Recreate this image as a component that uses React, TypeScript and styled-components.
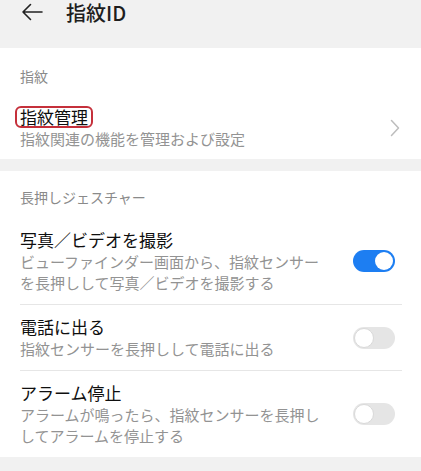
import React, { useState } from "react";
import styled, { createGlobalStyle } from "styled-components";

const GlobalStyle = createGlobalStyle`
	html, body {
		margin: 0;
		padding: 0;
		background: #f1f1f1;
	}
	body {
		font-family: "Noto Sans CJK JP", "Noto Sans", sans-serif;
		-webkit-font-smoothing: antialiased;
	}
`;

const Page = styled.div`
	width: 421px;
	height: 471px;
	overflow: hidden;
	background: #f1f1f1;
	display: flex;
	flex-direction: column;
`;

const Header = styled.div`
	height: 48px;
	display: flex;
	align-items: flex-start;
	padding-left: 21px;
	box-sizing: border-box;
`;

const BackBtn = styled.div`
	width: 22px;
	height: 24px;
	display: flex;
	align-items: center;
`;

const HeaderTitle = styled.h1`
	margin: 0 0 0 23px;
	padding-top: 1px;
	font-size: 20px;
	line-height: 23px;
	font-weight: 500;
	color: #1e1e1e;
`;

const Card = styled.section<{ $top: number; $bottom: number }>`
	background: #fff;
	padding: ${p => p.$top}px 19px ${p => p.$bottom}px 20px;
	margin-bottom: 12px;
`;

const SectionLabel = styled.div<{ $gap: number }>`
	font-size: 14px;
	line-height: 20px;
	color: #8a8a8a;
	margin-bottom: ${p => p.$gap}px;
`;

const Row = styled.div<{ $top: number; $bottom: number; $divider?: boolean }>`
	display: flex;
	align-items: center;
	padding: ${p => p.$top}px 0 ${p => p.$bottom}px;
	border-top: ${p => (p.$divider ? "1px solid #e6e6e6" : "none")};
`;

const TextBlock = styled.div`
	flex: 1;
	min-width: 0;
`;

const Title = styled.div`
	font-size: 17px;
	line-height: 22px;
	color: #0f0f0f;
`;

const Marked = styled.span`
	display: inline-block;
	line-height: 18px;
	padding: 0 3px;
	margin-left: -5px;
	border: 2px solid #c5303b;
	border-radius: 6px;
`;

const Sub = styled.div`
	font-size: 15px;
	line-height: 21px;
	color: #939393;
	max-width: 310px;
`;

const Track = styled.button<{ $on: boolean }>`
	position: relative;
	width: 42px;
	height: 22px;
	border: none;
	padding: 0;
	margin-right: 7px;
	border-radius: 11px;
	background: ${p => (p.$on ? "#1d7ef2" : "#e5e5e5")};
	cursor: pointer;
	flex-shrink: 0;
`;

const Knob = styled.span<{ $on: boolean }>`
	position: absolute;
	left: ${p => (p.$on ? "22px" : "1px")};
	top: ${p => (p.$on ? "2px" : "1px")};
	width: ${p => (p.$on ? "18px" : "20px")};
	height: ${p => (p.$on ? "18px" : "20px")};
	border-radius: 50%;
	background: #fff;
	box-sizing: border-box;
	border: ${p => (p.$on ? "none" : "1px solid #d9d9d9")};
`;

const Chevron = styled.div`
	width: 10px;
	height: 18px;
	margin-right: 2px;
	display: flex;
	align-items: center;
`;

const Toggle: React.FC<{ initial: boolean }> = ({ initial }) => {
	const [on, setOn] = useState(initial);
	return (
		<Track $on={on} onClick={() => setOn(!on)}>
			<Knob $on={on} />
		</Track>
	);
};

const gestures = [
	{
		title: "写真／ビデオを撮影",
		sub: "ビューファインダー画面から、指紋センサーを長押しして写真／ビデオを撮影する",
		on: true
	},
	{
		title: "電話に出る",
		sub: "指紋センサーを長押しして電話に出る",
		on: false
	},
	{
		title: "アラーム停止",
		sub: "アラームが鳴ったら、指紋センサーを長押ししてアラームを停止する",
		on: false
	}
];

const App: React.FC = () => {
	return (
		<Page>
			<GlobalStyle />
			<Header>
				<BackBtn>
					<svg width="22" height="18" viewBox="0 0 22 18" fill="none">
						<path
							d="M21 9H2M9.5 1.5L2 9l7.5 7.5"
							stroke="#222"
							strokeWidth="1.6"
							strokeLinecap="round"
							strokeLinejoin="round"
						/>
					</svg>
				</BackBtn>
				<HeaderTitle>指紋ID</HeaderTitle>
			</Header>

			<Card $top={18} $bottom={0}>
				<SectionLabel $gap={9}>指紋</SectionLabel>
				<Row $top={11} $bottom={10}>
					<TextBlock>
						<Title>
							<Marked>指紋管理</Marked>
						</Title>
						<Sub>指紋関連の機能を管理および設定</Sub>
					</TextBlock>
					<Chevron>
						<svg width="10" height="18" viewBox="0 0 10 18" fill="none">
							<path
								d="M1.5 1.5L8.5 9l-7 7.5"
								stroke="#bdbdbd"
								strokeWidth="1.5"
								strokeLinecap="round"
								strokeLinejoin="round"
							/>
						</svg>
					</Chevron>
				</Row>
			</Card>

			<Card $top={16} $bottom={0}>
				<SectionLabel $gap={11}>長押しジェスチャー</SectionLabel>
				{gestures.map((g, i) => (
					<Row key={g.title} $top={11} $bottom={11} $divider={i > 0}>
						<TextBlock>
							<Title>{g.title}</Title>
							<Sub>{g.sub}</Sub>
						</TextBlock>
						<Toggle initial={g.on} />
					</Row>
				))}
			</Card>
		</Page>
	);
};

export default App;
